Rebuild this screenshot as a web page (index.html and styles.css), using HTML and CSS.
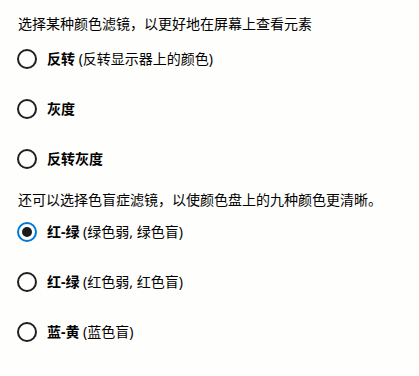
FILE: index.html
```html
<!DOCTYPE html>
<html lang="zh-CN">
<head>
<meta charset="utf-8">
<link rel="stylesheet" href="styles.css">
</head>
<body>
<div class="page">
  <p class="heading">选择某种颜色滤镜，以更好地在屏幕上查看元素</p>
  <div class="options">
    <div class="option"><span class="radio"></span><span class="label"><b>反转</b> (反转显示器上的颜色)</span></div>
    <div class="option"><span class="radio"></span><span class="label"><b>灰度</b></span></div>
    <div class="option"><span class="radio"></span><span class="label"><b>反转灰度</b></span></div>
  </div>
  <p class="heading heading2">还可以选择色盲症滤镜，以使颜色盘上的九种颜色更清晰。</p>
  <div class="options options2">
    <div class="option"><span class="radio checked"></span><span class="label"><b>红-绿</b> (绿色弱, 绿色盲)</span></div>
    <div class="option"><span class="radio"></span><span class="label"><b>红-绿</b> (红色弱, 红色盲)</span></div>
    <div class="option"><span class="radio"></span><span class="label"><b>蓝-黄</b> (蓝色盲)</span></div>
  </div>
</div>
</body>
</html>
```
FILE: styles.css
```css
html, body {
  margin: 0;
  padding: 0;
  background: #fefefc;
}
.page {
  padding: 14px 18px 0 18px;
  font-family: "Noto Sans", "Noto Sans CJK SC", sans-serif;
  font-size: 14px;
  color: #000;
}
.heading {
  margin: 0;
  line-height: 20px;
  height: 20px;
}
.heading2 {
  margin-top: 15px;
}
.options {
  display: flex;
  flex-direction: column;
  gap: 18px;
  margin-top: 9px;
}
.options2 {
  margin-top: 6px;
}
.option {
  display: flex;
  align-items: center;
  height: 32px;
}
.radio {
  box-sizing: border-box;
  width: 20px;
  height: 20px;
  border: 2px solid #1f1f1f;
  border-radius: 50%;
  margin-left: -1px;
  margin-right: 10px;
  display: flex;
  align-items: center;
  justify-content: center;
  flex: none;
}
.radio.checked {
  border-color: #0078d7;
}
.radio.checked::after {
  content: "";
  width: 10px;
  height: 10px;
  border-radius: 50%;
  background: #1b1b1b;
}
.label {
  line-height: 20px;
}
.label b {
  font-weight: 700;
}
```
